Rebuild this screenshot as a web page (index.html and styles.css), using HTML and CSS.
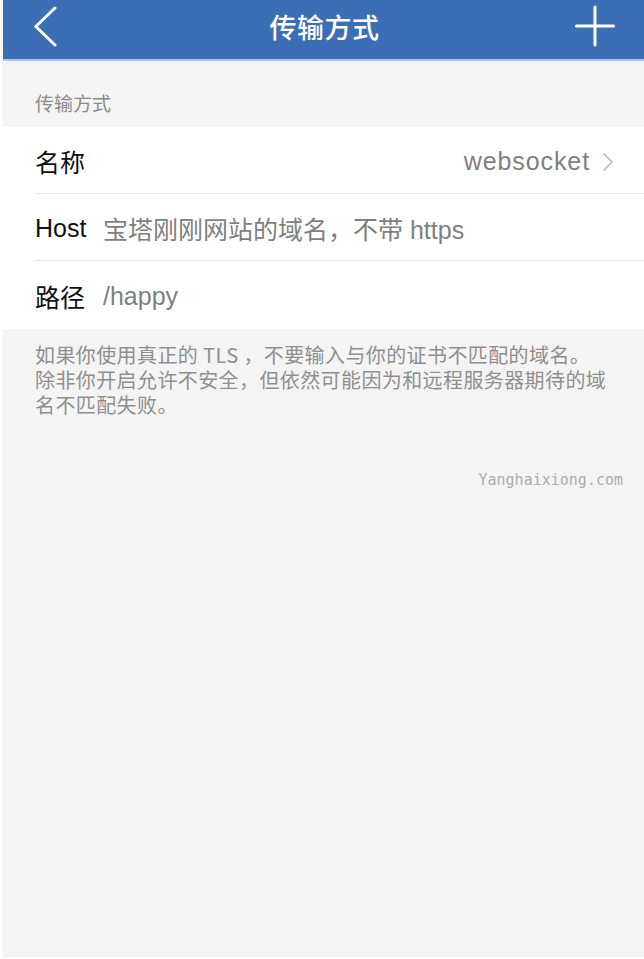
FILE: index.html
```html
<!DOCTYPE html>
<html lang="zh-CN">
<head>
<meta charset="utf-8">
<title>传输方式</title>
<link rel="stylesheet" href="styles.css">
</head>
<body>
<div class="app">
  <header class="nav">
    <svg class="nav-back" width="30" height="58" viewBox="0 0 30 58" aria-hidden="true">
      <polyline points="21,8 1.8,26.5 21,45" fill="none" stroke="#fff" stroke-width="3" stroke-linecap="round" stroke-linejoin="round"/>
    </svg>
    <h1 class="nav-title">传输方式</h1>
    <svg class="nav-add" width="40" height="58" viewBox="0 0 40 58" aria-hidden="true">
      <line x1="20" y1="7" x2="20" y2="45" stroke="#fff" stroke-width="3" stroke-linecap="round"/>
      <line x1="1.5" y1="26" x2="38.5" y2="26" stroke="#fff" stroke-width="3" stroke-linecap="round"/>
    </svg>
  </header>

  <div class="section-title">传输方式</div>

  <div class="group">
    <div class="row">
      <div class="row-inner">
        <span class="label">名称</span>
        <span class="value value-right">websocket</span>
        <svg class="chev" width="12" height="20" viewBox="0 0 12 20" aria-hidden="true">
          <polyline points="2,2 10,10 2,18" fill="none" stroke="#c4c4c8" stroke-width="2" stroke-linecap="round" stroke-linejoin="round"/>
        </svg>
      </div>
    </div>
    <div class="row">
      <div class="row-inner">
        <span class="label">Host</span>
        <span class="value">宝塔刚刚网站的域名，不带 https</span>
      </div>
    </div>
    <div class="row">
      <div class="row-inner last">
        <span class="label">路径</span>
        <span class="value">/happy</span>
      </div>
    </div>
  </div>

  <p class="note">如果你使用真正的 TLS ，不要输入与你的证书不匹配的域名。<br>除非你开启允许不安全，但依然可能因为和远程服务器期待的域名不匹配失败。</p>

  <div class="watermark">Yanghaixiong.com</div>
</div>
</body>
</html>
```

FILE: styles.css
```css
* {
  box-sizing: border-box;
}

html, body {
  margin: 0;
  padding: 0;
  background: #ffffff;
}

body {
  font-family: "Liberation Sans", "Noto Sans CJK SC", sans-serif;
}

.app {
  margin-left: 3px;
  height: 957px;
  background: #f4f4f4;
  display: flex;
  flex-direction: column;
}

.nav {
  height: 61px;
  background: #3c6eb5;
  border-bottom: 2px solid #aac7ec;
  display: grid;
  grid-template-columns: 1fr auto 1fr;
  align-items: start;
  padding: 0 29px 0 31px;
}

.nav-back {
  display: block;
  justify-self: start;
}

.nav-add {
  display: block;
  justify-self: end;
}

.nav-title {
  margin: 0;
  color: #ffffff;
  font-family: "Noto Sans CJK SC", sans-serif;
  font-size: 27px;
  font-weight: 500;
  line-height: 54px;
  letter-spacing: 0.5px;
}

.section-title {
  height: 66px;
  display: flex;
  align-items: flex-end;
  padding: 0 0 12px 32px;
  color: #8a8a8a;
  font-family: "Noto Sans CJK SC", sans-serif;
  font-size: 19px;
  line-height: 24px;
}

.group {
  background: #ffffff;
}

.row {
  padding-left: 32px;
}

.row-inner {
  height: 67px;
  display: flex;
  align-items: center;
  border-bottom: 1px solid #e6e6e6;
  padding-right: 30px;
  padding-top: 2px;
  font-size: 25px;
}

.row-inner.last {
  border-bottom: none;
  height: 68px;
}

.label {
  width: 68px;
  flex: none;
  color: #111111;
}

.value {
  color: #7f7f7f;
}

.value-right {
  margin-left: auto;
  letter-spacing: 0.9px;
}

.chev {
  display: block;
  margin-left: 12px;
  margin-top: 2px;
}

.note {
  margin: 0;
  padding: 13px 20px 0 32px;
  color: #8f8f8f;
  font-family: "Noto Sans CJK SC", sans-serif;
  font-size: 20px;
  line-height: 25px;
  letter-spacing: 0.4px;
}

.watermark {
  margin-top: 53px;
  padding-right: 21px;
  text-align: right;
  color: #adadad;
  font-family: "DejaVu Sans Mono", monospace;
  font-size: 15px;
  line-height: 20px;
}
```
